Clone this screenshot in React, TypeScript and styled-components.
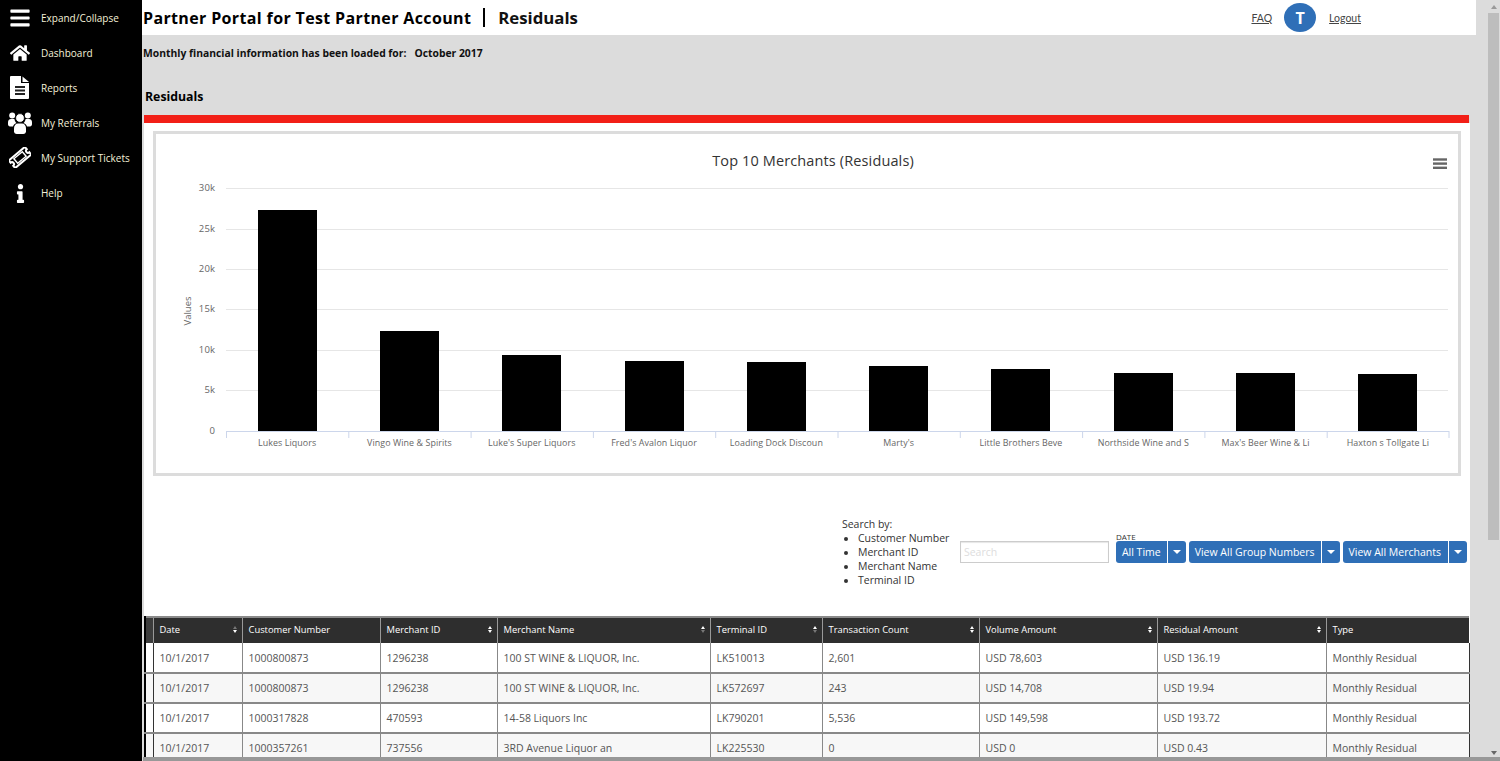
import * as React from "react";
import styled, { createGlobalStyle } from "styled-components";
import { FaBars, FaHome, FaInfo } from "react-icons/fa";

const FileIcon = () => (
  <svg width="20" height="23" viewBox="0 0 20 23">
    <path d="M1 0h10v7h8v15a1 1 0 0 1-1 1H1a1 1 0 0 1-1-1V1a1 1 0 0 1 1-1z" fill="#fff" />
    <path d="M12.5 0.5 19 6h-6.5z" fill="#fff" />
    <path d="M5 10h10v2H5zM5 13.5h10v2H5zM5 17h10v2H5z" fill="#222" />
  </svg>
);

const UsersIcon = () => (
  <svg width="24" height="23" viewBox="0 0 24 23" fill="#fff">
    <circle cx="4.2" cy="4.6" r="3" />
    <circle cx="19.8" cy="4.6" r="3" />
    <path d="M0 11.5C0 9.5 1 8 3 8h3.4c.3 1.8 1 3 2 4-2 .8-3 2-3.4 3.5H2C.8 15.5 0 14.5 0 13.3z" />
    <path d="M24 11.5C24 9.5 23 8 21 8h-3.4c-.3 1.8-1 3-2 4 2 .8 3 2 3.4 3.5h3c1.2 0 2-1 2-2.2z" />
    <circle cx="12" cy="7" r="4.4" stroke="#000" strokeWidth="0.8" />
    <path d="M6 17.5c0-3 1.5-5 4-5h4c2.5 0 4 2 4 5v2.7c0 1.5-1 2.8-2.8 2.8H8.800C7 23 6 21.700 6 20.200z" />
  </svg>
);

const TicketIcon = () => (
  <svg width="22" height="21" viewBox="0 0 22 21">
    <g transform="rotate(-40 11 10.500)">
      <path
        d="M0.500 5.500h21v3a2 2 0 0 0 0 4v3h-21v-3a2 2 0 0 0 0-4z"
        fill="#000"
        stroke="#fff"
        strokeWidth="2"
      />
      <rect x="5.500" y="7.500" width="11" height="6" fill="none" stroke="#fff" strokeWidth="1.400" />
    </g>
  </svg>
);

const navItems = [
  { label: "Expand/Collapse", icon: <FaBars size={22} /> },
  { label: "Dashboard", icon: <FaHome size={20} /> },
  { label: "Reports", icon: <FileIcon /> },
  { label: "My Referrals", icon: <UsersIcon /> },
  { label: "My Support Tickets", icon: <TicketIcon /> },
  { label: "Help", icon: <FaInfo size={19} /> },
];

const merchants = [
  { name: "Lukes Liquors", top: 210 },
  { name: "Vingo Wine & Spirits", top: 331 },
  { name: "Luke's Super Liquors", top: 355 },
  { name: "Fred's Avalon Liquor", top: 361 },
  { name: "Loading Dock Discoun", top: 362 },
  { name: "Marty's", top: 366 },
  { name: "Little Brothers Beve", top: 369 },
  { name: "Northside Wine and S", top: 373 },
  { name: "Max's Beer Wine & Li", top: 373 },
  { name: "Haxton s Tollgate Li", top: 374 },
];

const yTicks = [
  { label: "30k", y: 188 },
  { label: "25k", y: 229 },
  { label: "20k", y: 269 },
  { label: "15k", y: 309 },
  { label: "10k", y: 350 },
  { label: "5k", y: 390 },
  { label: "0", y: 431 },
];

const columns = [
  { label: "Date", width: 89, sort: "down" },
  { label: "Customer Number", width: 138 },
  { label: "Merchant ID", width: 117, sort: "both" },
  { label: "Merchant Name", width: 213, sort: "up" },
  { label: "Terminal ID", width: 112, sort: "up" },
  { label: "Transaction Count", width: 157, sort: "both" },
  { label: "Volume Amount", width: 178, sort: "both" },
  { label: "Residual Amount", width: 169, sort: "both" },
  { label: "Type", width: 143 },
];

const rows = [
  ["10/1/2017", "1000800873", "1296238", "100 ST WINE & LIQUOR, Inc.", "LK510013", "2,601", "USD 78,603", "USD 136.19", "Monthly Residual"],
  ["10/1/2017", "1000800873", "1296238", "100 ST WINE & LIQUOR, Inc.", "LK572697", "243", "USD 14,708", "USD 19.94", "Monthly Residual"],
  ["10/1/2017", "1000317828", "470593", "14-58 Liquors Inc", "LK790201", "5,536", "USD 149,598", "USD 193.72", "Monthly Residual"],
  ["10/1/2017", "1000357261", "737556", "3RD Avenue Liquor an", "LK225530", "0", "USD 0", "USD 0.43", "Monthly Residual"],
];

const Chart = () => {
  // chart coordinates follow the page, offset by the svg's origin
  const ox = 156;
  const oy = 134;
  const step = 122.3;
  return (
    <svg width="1302" height="339" viewBox={`${ox} ${oy} 1302 339`} style={{ display: "block" }}>
      <text x="813" y="165.500" textAnchor="middle" fontSize="14.500" letterSpacing="0.130" fill="#333" fontFamily="'Open Sans', sans-serif">
        Top 10 Merchants (Residuals)
      </text>
      {yTicks.map((t) => (
        <g key={t.label}>
          {t.label !== "0" && <line x1="226" x2="1448" y1={t.y + 0.5} y2={t.y + 0.5} stroke="#e6e6e6" />}
          <text x="215" y={t.y + 3} textAnchor="end" fontSize="9.500" letterSpacing="0.100" fill="#666" fontFamily="'Open Sans', sans-serif">
            {t.label}
          </text>
        </g>
      ))}
      <text transform="translate(190.500 311) rotate(-90)" textAnchor="middle" fontSize="9.500" fill="#666" fontFamily="'Open Sans', sans-serif">
        Values
      </text>
      {merchants.map((m, i) => {
        const cx = 226 + step * i + step / 2;
        return (
          <g key={m.name}>
            <rect x={Math.round(cx - 29.5)} y={m.top} width="59" height={431 - m.top} fill="#000" />
            <line x1={226.5 + step * i} x2={226.5 + step * i} y1="431" y2="438" stroke="#ccd6eb" />
            <text x={cx} y="445.500" textAnchor="middle" fontSize="8.900" letterSpacing="0.080" fill="#666" fontFamily="'Open Sans', sans-serif">
              {m.name}
            </text>
          </g>
        );
      })}
      <line x1="1449" x2="1449" y1="431" y2="438" stroke="#ccd6eb" />
      <line x1="226" x2="1449" y1="431.500" y2="431.500" stroke="#ccd6eb" />
      <g stroke="#666" strokeWidth="2.400">
        <line x1="1433" x2="1447" y1="159.500" y2="159.500" />
        <line x1="1433" x2="1447" y1="163.600" y2="163.600" />
        <line x1="1433" x2="1447" y1="167.800" y2="167.800" />
      </g>
    </svg>
  );
};

export default function App() {
  return (
    <>
      <GlobalStyle />
      <Page>
        <Sidebar>
          {navItems.map((item) => (
            <NavItem key={item.label}>
              <NavIcon>{item.icon}</NavIcon>
              <NavLabel>{item.label}</NavLabel>
            </NavItem>
          ))}
        </Sidebar>

        <Main>
          <Header>
            <Title>Partner Portal for Test Partner Account</Title>
            <TitleDivider />
            <PageName>Residuals</PageName>
            <HeaderLinks>
              <HeaderLink>FAQ</HeaderLink>
              <Avatar>T</Avatar>
              <HeaderLink>Logout</HeaderLink>
            </HeaderLinks>
          </Header>

          <Notice>
            Monthly financial information has been loaded for:<NoticeDate>October 2017</NoticeDate>
          </Notice>
          <SectionTitle>Residuals</SectionTitle>
          <RedBar />

          <Panel>
            <ChartBox>
              <Chart />
            </ChartBox>

            <Filters>
              <SearchHelp>
                Search by:
                <SearchList>
                  <li>Customer Number</li>
                  <li>Merchant ID</li>
                  <li>Merchant Name</li>
                  <li>Terminal ID</li>
                </SearchList>
              </SearchHelp>
              <SearchInput placeholder="Search" />
              <DateGroup>
                <DateLabel>DATE</DateLabel>
                <SplitButton>
                  <ButtonMain>All Time</ButtonMain>
                  <ButtonCaret />
                </SplitButton>
              </DateGroup>
              <SplitButton>
                <ButtonMain>View All Group Numbers</ButtonMain>
                <ButtonCaret />
              </SplitButton>
              <SplitButton>
                <ButtonMain $wide>View All Merchants</ButtonMain>
                <ButtonCaret />
              </SplitButton>
            </Filters>

            <Table>
              <colgroup>
                <col style={{ width: 8 }} />
                {columns.map((c) => (
                  <col key={c.label} style={{ width: c.width }} />
                ))}
              </colgroup>
              <thead>
                <tr>
                  <Th />
                  {columns.map((c) => (
                    <Th key={c.label}>
                      <ThInner>
                        {c.label}
                        {c.sort && (
                          <SortIcon>
                            <SortUp $on={c.sort !== "down"} />
                            <SortDown $on={c.sort !== "up"} />
                          </SortIcon>
                        )}
                      </ThInner>
                    </Th>
                  ))}
                </tr>
              </thead>
              <tbody>
                {rows.map((r, i) => (
                  <Row key={i} $odd={i % 2 === 1}>
                    <Td />
                    {r.map((v, j) => (
                      <Td key={j}>{v}</Td>
                    ))}
                  </Row>
                ))}
              </tbody>
            </Table>
          </Panel>
        </Main>

        <Scrollbar>
          <ScrollArrow $dir="up" />
          <ScrollThumb />
          <ScrollArrow $dir="down" />
        </Scrollbar>
        <BottomBar />
      </Page>
    </>
  );
}

const GlobalStyle = createGlobalStyle`
  html, body, #root {
    margin: 0;
    height: 100%;
    overflow: hidden;
  }
  body {
    font-family: "Open Sans", "Liberation Sans", sans-serif;
    background: #dcdcdc;
  }
`;

const Page = styled.div`
  position: relative;
  display: flex;
  height: 761px;
  overflow: hidden;
  background: #dcdcdc;
`;

const Sidebar = styled.nav`
  flex: 0 0 142px;
  background: #000;
`;

const NavItem = styled.div`
  display: flex;
  align-items: center;
  height: 35.1px;
  color: #fff;
`;

const NavIcon = styled.span`
  flex: 0 0 41px;
  display: flex;
  justify-content: center;
  padding-right: 1px;
  box-sizing: border-box;
`;

const NavLabel = styled.span`
  font-size: 10px;
  color: #f4f0d8;
  white-space: nowrap;
`;

const Main = styled.main`
  flex: 0 0 1334px;
  min-width: 0;
`;

const Header = styled.header`
  display: flex;
  align-items: center;
  height: 35px;
  background: #fff;
  padding-left: 1px;
`;

const Title = styled.h1`
  margin: 0;
  font-size: 16px;
  font-weight: 700;
  letter-spacing: 0.36px;
  color: #000;
  white-space: nowrap;
`;

const TitleDivider = styled.span`
  width: 2px;
  height: 19px;
  margin: 0 13px 0 12px;
  background: #000;
`;

const PageName = styled.span`
  font-size: 16.8px;
  font-weight: 700;
  color: #111;
`;

const HeaderLinks = styled.div`
  display: flex;
  align-items: center;
  margin-left: auto;
  margin-right: 115px;
`;

const HeaderLink = styled.a`
  font-family: Lato, sans-serif;
  font-size: 10.5px;
  color: #444;
  text-decoration: underline;
`;

const Avatar = styled.span`
  display: flex;
  align-items: center;
  justify-content: center;
  width: 32px;
  height: 29px;
  margin: 0 13px 0 12px;
  border-radius: 50%;
  background: #2f6fb7;
  color: #fff;
  font-size: 16px;
  font-weight: 700;
`;

const Notice = styled.p`
  margin: 0;
  padding: 11px 0 0 1px;
  font-size: 10.35px;
  line-height: 15px;
  font-weight: 700;
  color: #111;
`;

const NoticeDate = styled.span`
  margin-left: 8px;
`;

const SectionTitle = styled.h2`
  margin: 0;
  padding: 27px 0 0 3px;
  font-size: 12.3px;
  line-height: 17px;
  font-weight: 700;
  color: #000;
`;

const RedBar = styled.div`
  width: 1325px;
  height: 8px;
  margin: 10px 0 0 2px;
  background: #f21f17;
`;

const Panel = styled.section`
  width: 1326px;
  height: 640px;
  margin-left: 2px;
  padding: 8px 0 0 0;
  box-sizing: border-box;
  background: #fff;
`;

const ChartBox = styled.div`
  width: 1302px;
  height: 339px;
  margin-left: 9px;
  border: 3px solid #dcdcdc;
`;

const Filters = styled.div`
  display: flex;
  align-items: center;
  justify-content: flex-end;
  gap: 3px;
  height: 72px;
  margin-top: 40px;
  padding-right: 3px;
`;

const SearchHelp = styled.div`
  width: 115px;
  font-size: 10.5px;
  line-height: 14px;
  color: #333;
`;

const SearchList = styled.ul`
  margin: 0;
  padding-left: 16px;
`;

const SearchInput = styled.input`
  width: 149px;
  height: 22px;
  margin-right: 4px;
  padding: 0 3px;
  box-sizing: border-box;
  border: 1px solid #ccc;
  box-shadow: inset 0 1px 1px rgba(0, 0, 0, 0.1);
  font: 10.5px "Open Sans", sans-serif;
  &::placeholder {
    color: #ddd;
  }
`;

const DateGroup = styled.div`
  position: relative;
`;

const DateLabel = styled.span`
  position: absolute;
  left: 0;
  top: -9px;
  font-size: 8px;
  line-height: 9px;
  color: #333;
`;

const SplitButton = styled.div`
  display: flex;
  height: 22px;
  border-radius: 3px;
  overflow: hidden;
  background: #2f6fb7;
  color: #fff;
  font-size: 10.5px;
`;

const ButtonMain = styled.span<{ $wide?: boolean }>`
  display: flex;
  align-items: center;
  padding: 0 ${(p) => (p.$wide ? "7px" : "6px")} 0 6px;
  white-space: nowrap;
`;

const ButtonCaret = styled.span`
  display: flex;
  align-items: center;
  justify-content: center;
  width: 19px;
  box-sizing: border-box;
  border-left: 1px solid #fff;
  &::after {
    content: "";
    border: 4px solid transparent;
    border-top-color: #fff;
    border-bottom: 0;
  }
`;

const Table = styled.table`
  width: 1324px;
  margin: 28px 0 0 0;
  table-layout: fixed;
  border-collapse: collapse;
  border-top: 2px solid #8a8a8a;
  font-size: 10.5px;
`;

const Th = styled.th`
  height: 26px;
  padding: 0 5px 2px 6px;
  box-sizing: border-box;
  background: #2e2e2e;
  color: #fff;
  font-weight: 500;
  font-size: 9.4px;
  text-align: left;
  border-left: 1px solid #999;
  &:first-child {
    border-left: 2px solid #000;
    background: #3c3c3c;
  }
`;

const ThInner = styled.div`
  display: flex;
  align-items: center;
  justify-content: space-between;
`;

const SortIcon = styled.span`
  display: flex;
  flex-direction: column;
  gap: 1px;
`;

const SortUp = styled.i<{ $on: boolean }>`
  display: block;
  border: 2.5px solid transparent;
  border-top: 0;
  border-bottom: 3px solid ${(p) => (p.$on ? "#fff" : "#777")};
`;

const SortDown = styled.i<{ $on: boolean }>`
  display: block;
  border: 2.5px solid transparent;
  border-bottom: 0;
  border-top: 3px solid ${(p) => (p.$on ? "#fff" : "#777")};
`;

const Row = styled.tr<{ $odd: boolean }>`
  background: ${(p) => (p.$odd ? "#f7f7f7" : "#fff")};
`;

const Td = styled.td`
  height: 30px;
  padding: 0 5px 0 6px;
  box-sizing: border-box;
  color: #555;
  white-space: nowrap;
  border-left: 1px solid #888;
  border-bottom: 2px solid #888;
  &:first-child {
    border-left: 2px solid #000;
  }
  &:nth-child(2) {
    border-left-color: #333;
  }
  &:last-child {
    border-right: 1px solid #333;
  }
`;

const Scrollbar = styled.aside`
  display: flex;
  flex-direction: column;
  flex: 0 0 24px;
  box-sizing: border-box;
  padding: 0 1px 0 12px;
  height: 761px;
`;

const ScrollThumb = styled.div`
  height: 527px;
  margin-bottom: auto;
  background: #bdbdbd;
`;

const ScrollArrow = styled.div<{ $dir: "up" | "down" }>`
  display: flex;
  align-items: center;
  justify-content: center;
  flex: 0 0 13px;
  margin-bottom: ${(p) => (p.$dir === "down" ? "2px" : "0")};
  &::after {
    content: "";
    border: 3.5px solid transparent;
    ${(p) =>
      p.$dir === "up"
        ? "border-top: 0; border-bottom: 4px solid #999;"
        : "border-bottom: 0; border-top: 4px solid #666;"}
  }
`;

const BottomBar = styled.div`
  position: absolute;
  left: 143px;
  right: 0;
  bottom: 0;
  height: 4px;
  background: #989898;
`;
